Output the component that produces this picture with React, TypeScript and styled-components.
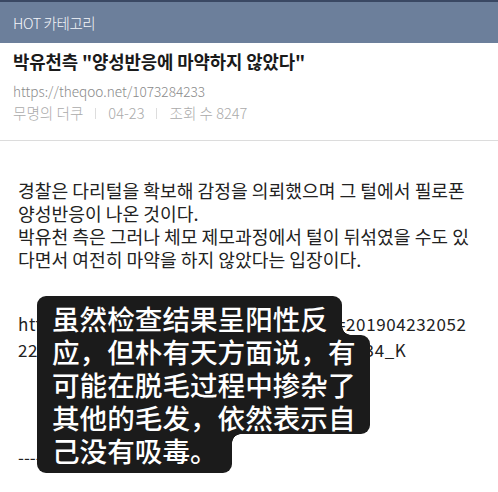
import React from "react";
import styled, { createGlobalStyle } from "styled-components";

const GlobalStyle = createGlobalStyle`
  html, body {
    margin: 0;
    padding: 0;
    background: #ffffff;
  }
  body {
    font-family: "Noto Sans CJK KR", "Noto Sans", sans-serif;
    overflow: hidden;
  }
`;

const Page = styled.div`
  position: relative;
  width: 498px;
  height: 492px;
  overflow: hidden;
  background: #ffffff;
`;

const TopBar = styled.header`
  height: 41px;
  border-top: 2px solid #3a4863;
  background: #6c7f9b;
  display: flex;
  align-items: center;
  padding: 0 13px;
  color: #f4f6fa;
  font-family: "Noto Sans CJK KR", sans-serif;
  font-size: 14.5px;
  font-weight: 300;
  letter-spacing: -0.4px;
`;

const PostHead = styled.section`
  padding: 6px 13px 17px;
  border-bottom: 1px solid #dcdcdc;
  display: flex;
  flex-direction: column;
`;

const Title = styled.h1`
  margin: 0;
  font-family: "Noto Sans CJK KR", sans-serif;
  font-size: 17.8px;
  font-weight: 700;
  line-height: 24px;
  color: #1a1a1a;
  letter-spacing: -0.1px;
`;

const Url = styled.div`
  margin-top: 8px;
  font-family: "Noto Sans CJK KR", sans-serif;
  font-size: 13.6px;
  font-weight: 300;
  line-height: 20px;
  color: #8a8a8a;
`;

const Meta = styled.div`
  margin-top: 2px;
  display: flex;
  align-items: center;
  gap: 11px;
  font-family: "Noto Sans CJK KR", sans-serif;
  font-size: 14.6px;
  font-weight: 300;
  line-height: 20px;
  color: #aaaaaa;
`;

const Sep = styled.span`
  width: 1px;
  height: 11px;
  background: #dddddd;
  margin: 0 1px;
`;

const Body = styled.article`
  padding: 38px 18px 0;
  font-family: "Noto Sans CJK KR", sans-serif;
  color: #222222;
`;

const Para = styled.p<{ $gap: number; $lh: number; $size: number; $ls?: number }>`
  margin: ${(p) => p.$gap}px 0 0;
  font-size: ${(p) => p.$size}px;
  line-height: ${(p) => p.$lh}px;
  letter-spacing: ${(p) => p.$ls ?? 0}px;
  white-space: nowrap;
`;

const Caption = styled.div`
  position: absolute;
  left: 37px;
  top: 296px;
  display: flex;
  flex-direction: column;
  align-items: flex-start;
`;

const CaptionLine = styled.div<{
  $radius: string;
  $pt?: number;
  $pb?: number;
  $notch?: "top" | "bottom";
}>`
  position: relative;
  background: #1b1b1b;
  color: #ffffff;
  font-family: "Noto Sans CJK SC", "Noto Sans CJK KR", sans-serif;
  font-size: 27.6px;
  font-weight: 500;
  line-height: 33px;
  padding: ${(p) => p.$pt ?? 0}px 14px ${(p) => p.$pb ?? 0}px 15px;
  border-radius: ${(p) => p.$radius};
  white-space: nowrap;

  &::after {
    content: "";
    display: ${(p) => (p.$notch ? "block" : "none")};
    position: absolute;
    right: -9px;
    width: 9px;
    height: 9px;
    ${(p) =>
      p.$notch === "top"
        ? "bottom: 0; background: radial-gradient(circle at 100% 0, transparent 8.5px, #1b1b1b 9px);"
        : "top: 0; background: radial-gradient(circle at 100% 100%, transparent 8.5px, #1b1b1b 9px);"}
  }
`;

const captionLines: {
  text: string;
  radius: string;
  pt?: number;
  pb?: number;
  notch?: "top" | "bottom";
}[] = [
  { text: "虽然检查结果呈阳性反", radius: "9px 9px 0 0", pt: 6, notch: "top" },
  { text: "应，但朴有天方面说，有", radius: "0 9px 0 0" },
  { text: "可能在脱毛过程中掺杂了", radius: "0" },
  { text: "其他的毛发，依然表示自", radius: "0 0 9px 0" },
  { text: "己没有吸毒。", radius: "0 0 9px 9px", pb: 6, notch: "bottom" },
];

export default function App() {
  return (
    <Page>
      <GlobalStyle />
      <TopBar>HOT 카테고리</TopBar>
      <PostHead>
        <Title>박유천측 "양성반응에 마약하지 않았다"</Title>
        <Url>https://theqoo.net/1073284233</Url>
        <Meta>
          <span>무명의 더쿠</span>
          <Sep />
          <span>04-23</span>
          <Sep />
          <span>조회 수 8247</span>
        </Meta>
      </PostHead>
      <Body>
        <Para $gap={0} $lh={23} $size={18.2}>
          경찰은 다리털을 확보해 감정을 의뢰했으며 그 털에서 필로폰
          <br />
          양성반응이 나온 것이다.
          <br />
          박유천 측은 그러나 체모 제모과정에서 털이 뒤섞였을 수도 있
          <br />
          다면서 여전히 마약을 하지 않았다는 입장이다.
        </Para>
        <Para $gap={40} $lh={26} $size={17} $ls={0.6}>
          https://news.v.daum.net/entertain?id=201904232052
          <br />
          2274a03e5b1c9d8f02a6b4e7c1d3f5a972734_K
        </Para>
        <Para $gap={82} $lh={24} $size={17}>
          ------------------------
        </Para>
      </Body>
      <Caption>
        {captionLines.map((l) => (
          <CaptionLine
            key={l.text}
            $radius={l.radius}
            $pt={l.pt}
            $pb={l.pb}
            $notch={l.notch}
          >
            {l.text}
          </CaptionLine>
        ))}
      </Caption>
    </Page>
  );
}
